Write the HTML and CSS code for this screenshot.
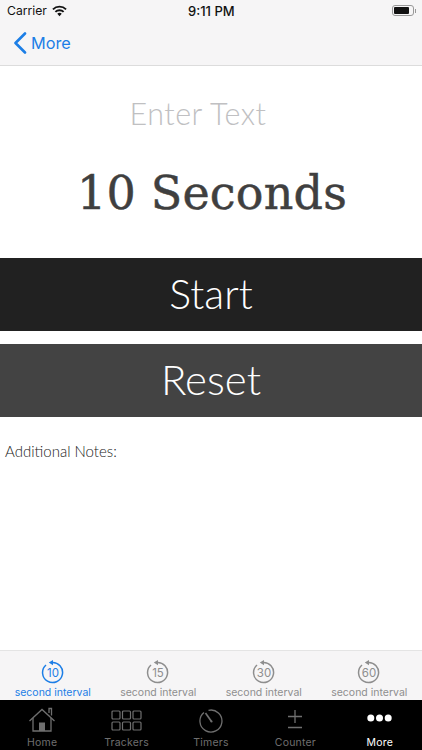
FILE: index.html
```html
<!DOCTYPE html>
<html lang="en">
<head>
	<meta charset="UTF-8">
	<title>10 Seconds</title>
	<link rel="stylesheet" href="styles.css">
</head>
<body>
	<div class="top">
		<div class="status">
			<div class="status-left">
				<span>Carrier</span>
				<svg class="wifi" width="15" height="12" viewBox="0 0 16 12"><path d="M8 11.600 5.600 9a3.400 3.400 0 0 1 4.800 0z" fill="#111"/><path d="M3.600 7A6.200 6.200 0 0 1 12.400 7M1 4.200a10 10 0 0 1 14 0" fill="none" stroke="#111" stroke-width="2"/></svg>
			</div>
			<div class="clock">9:11 PM</div>
			<div class="battery"><div class="battery-body"><div class="battery-fill"></div></div><div class="battery-tip"></div></div>
		</div>
		<div class="nav">
			<svg width="14" height="22" viewBox="0 0 14 22"><path d="M12 1.500 2.500 11 12 20.500" fill="none" stroke="#1c7ee6" stroke-width="2.600" stroke-linecap="round" stroke-linejoin="round"/></svg>
			<span>More</span>
		</div>
	</div>

	<div class="main">
		<div class="enter">Enter Text</div>
		<div class="seconds">10 Seconds</div>
		<div class="btn btn-start">Start</div>
		<div class="btn btn-reset">Reset</div>
		<div class="notes">Additional Notes:</div>
	</div>

	<div class="intervals">
		<div class="interval on">
			<svg width="24" height="24" viewBox="0 0 24 24"><path d="M10.500 2.600A10 10 0 1 1 5 5" fill="none" stroke="currentColor" stroke-width="1.500"/><path d="M12 0v5.200L7.800 2.600z" fill="currentColor"/><text x="12" y="17" text-anchor="middle">10</text></svg>
			<span>second interval</span>
		</div>
		<div class="interval">
			<svg width="24" height="24" viewBox="0 0 24 24"><path d="M10.500 2.600A10 10 0 1 1 5 5" fill="none" stroke="currentColor" stroke-width="1.500"/><path d="M12 0v5.200L7.800 2.600z" fill="currentColor"/><text x="12" y="17" text-anchor="middle">15</text></svg>
			<span>second interval</span>
		</div>
		<div class="interval">
			<svg width="24" height="24" viewBox="0 0 24 24"><path d="M10.500 2.600A10 10 0 1 1 5 5" fill="none" stroke="currentColor" stroke-width="1.500"/><path d="M12 0v5.200L7.800 2.600z" fill="currentColor"/><text x="12" y="17" text-anchor="middle">30</text></svg>
			<span>second interval</span>
		</div>
		<div class="interval">
			<svg width="24" height="24" viewBox="0 0 24 24"><path d="M10.500 2.600A10 10 0 1 1 5 5" fill="none" stroke="currentColor" stroke-width="1.500"/><path d="M12 0v5.200L7.800 2.600z" fill="currentColor"/><text x="12" y="17" text-anchor="middle">60</text></svg>
			<span>second interval</span>
		</div>
	</div>

	<div class="tabs">
		<div class="tab">
			<svg class="ico-home" width="28" height="25" viewBox="0 0 28 25" fill="none" stroke="currentColor" stroke-width="1.300"><path d="M1.500 14 14 2.500 26.500 14"/><path d="M5 11v13H23V11"/><path d="M21 6V1.500h2.500v7"/><path d="M11 24V15.500h6V24z" fill="currentColor" stroke="none"/></svg>
			<span>Home</span>
		</div>
		<div class="tab">
			<svg class="ico-grid" width="31" height="21" viewBox="0 0 31 21" fill="none" stroke="currentColor" stroke-width="1.200"><rect x="1" y="1" width="8" height="8" rx="1"/><rect x="11.500" y="1" width="8" height="8" rx="1"/><rect x="22" y="1" width="8" height="8" rx="1"/><rect x="1" y="12" width="8" height="8" rx="1"/><rect x="11.500" y="12" width="8" height="8" rx="1"/><rect x="22" y="12" width="8" height="8" rx="1"/></svg>
			<span>Trackers</span>
		</div>
		<div class="tab">
			<svg class="ico-timer" width="24" height="24" viewBox="0 0 24 24" fill="none" stroke="currentColor" stroke-width="1.300"><path d="M9.500 1.300A11 11 0 1 1 5 3.500"/><path d="M6.500 4 12.500 12.500" stroke-width="1.700"/><circle cx="12.500" cy="12.500" r="1.100" fill="currentColor" stroke="none"/></svg>
			<span>Timers</span>
		</div>
		<div class="tab">
			<svg class="ico-counter" width="16" height="24" viewBox="0 0 16 24" fill="none" stroke="currentColor" stroke-width="1.300"><path d="M8 1v13M1 7.500h14M1 18.500h14"/></svg>
			<span>Counter</span>
		</div>
		<div class="tab on">
			<svg class="ico-more" width="25" height="8" viewBox="0 0 25 8" fill="currentColor"><circle cx="3.800" cy="4" r="3.500"/><circle cx="12.500" cy="4" r="3.500"/><circle cx="21.200" cy="4" r="3.500"/></svg>
			<span>More</span>
		</div>
	</div>
</body>
</html>
```

FILE: styles.css
```css
*{margin: 0;padding: 0;box-sizing: border-box}
html,body{height: 100%}
body{width: 422px;height: 750px;overflow: hidden;display: flex;flex-direction: column;background: white;font-family: 'Lato','Liberation Sans',sans-serif}

.top{height: 66px;background: #f6f5f6;border-bottom: 1px solid #dcdcdc}
.status{height: 21px;padding: 0 6px 0 7px;display: flex;align-items: center;justify-content: space-between;position: relative;font-family: 'Inter','Liberation Sans',sans-serif;font-size: 12.200px;color: #111}
.status-left{display: flex;align-items: center;gap: 5px}
.clock{font-weight: 500;font-size: 13px;position: absolute;left: 188px}
.battery{display: flex;align-items: center;gap: 1px}
.battery-body{width: 22px;height: 11px;border: 1px solid #999;border-radius: 3px;padding: 1px}
.battery-fill{width: 15px;height: 7px;background: #111;border-radius: 1px}
.battery-tip{width: 1px;height: 4px;background: #999}
.nav{height: 44px;padding-left: 13px;display: flex;align-items: center;gap: 4px;color: #1c7ee6;font-family: 'Inter','Liberation Sans',sans-serif;font-size: 16.300px}

.main{flex: 1}
.enter{text-align: center;margin-top: 27px;font-size: 30.500px;font-weight: 300;line-height: 40px;color: #c0c0c2;letter-spacing: .5px;padding-right: 26px}
.seconds{text-align: center;margin-top: 30px;padding-left: 2px;font-family: 'DejaVu Serif','Liberation Serif',serif;font-size: 46px;line-height: 60px;color: #3f3f3f;letter-spacing: .2px;-webkit-text-stroke: .5px #3f3f3f}
.btn{height: 73px;color: white;text-align: center;font-size: 41px;font-weight: 300;line-height: 71px}
.btn-start{background: #212121;margin-top: 35px}
.btn-reset{background: #434343;margin-top: 13px;font-size: 42px}
.notes{margin: 24px 0 0 5px;font-size: 15px;font-weight: 300;line-height: 20px;color: #222}

.intervals{height: 50px;background: #f6f5f6;border-top: 1px solid #e4e4e4;display: flex}
.interval{flex: 1;display: flex;flex-direction: column;align-items: center;padding-top: 9px;color: #8e8e8e;font-family: 'Inter','Liberation Sans',sans-serif;font-size: 10.500px;line-height: 13px}
.interval svg{margin-bottom: 2px;display: block}
.interval text{font-size: 11.500px;fill: currentColor}
.interval.on{color: #1c7ee6}

.tabs{height: 50px;background: black;display: flex}
.tab{flex: 1;display: flex;flex-direction: column;align-items: center;justify-content: flex-end;color: #6f6f6f;font-family: 'Inter','Liberation Sans',sans-serif;font-size: 10.500px;line-height: 13px;letter-spacing: .2px;padding-bottom: 1px}
.tab svg{display: block}
.ico-home{margin-bottom: 4px}
.ico-grid{margin-bottom: 5px}
.ico-timer{margin-bottom: 3px}
.ico-counter{margin-bottom: 3px}
.ico-more{margin-bottom: 14px}
.tab.on{color: white}
```
